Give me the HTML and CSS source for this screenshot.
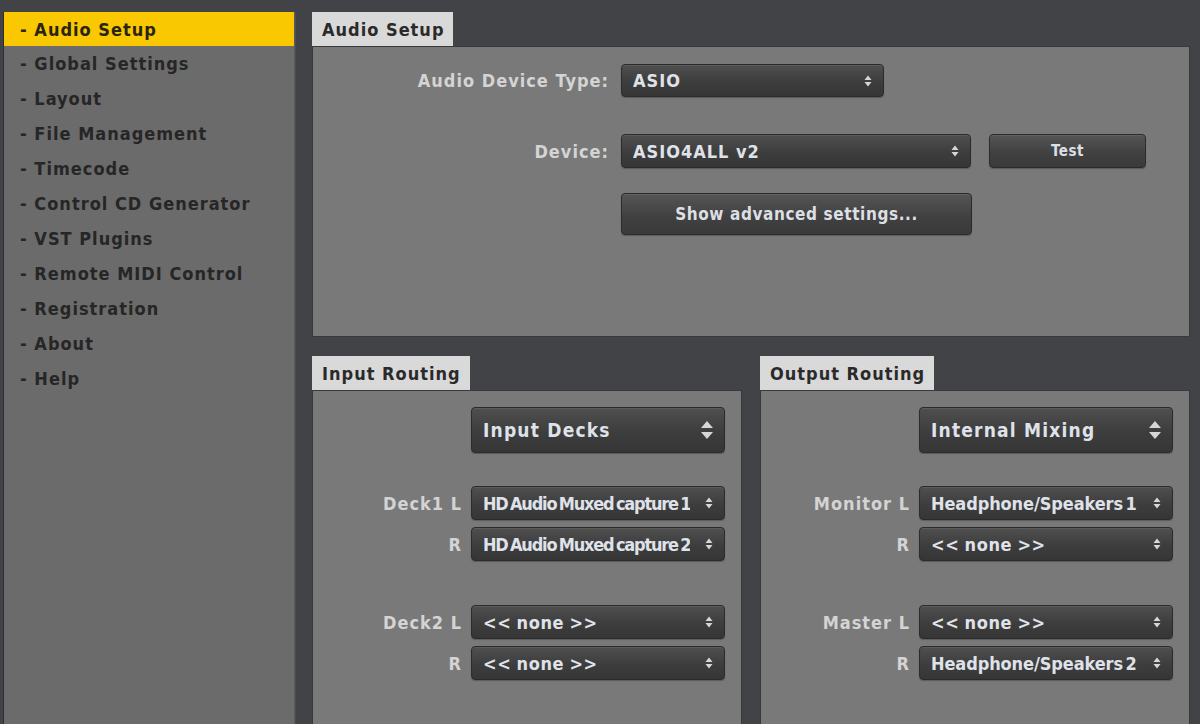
FILE: index.html
```html
<!DOCTYPE html>
<html>
<head>
<meta charset="utf-8">
<title>Audio Setup</title>
<link rel="stylesheet" href="styles.css">
</head>
<body>
<div class="app">
  <nav class="sidebar">
    <div class="nav-item active">- Audio Setup</div>
    <div class="nav-item">- Global Settings</div>
    <div class="nav-item">- Layout</div>
    <div class="nav-item">- File Management</div>
    <div class="nav-item">- Timecode</div>
    <div class="nav-item">- Control CD Generator</div>
    <div class="nav-item">- VST Plugins</div>
    <div class="nav-item">- Remote MIDI Control</div>
    <div class="nav-item">- Registration</div>
    <div class="nav-item">- About</div>
    <div class="nav-item">- Help</div>
  </nav>
  <main class="main">
    <section class="group group-top">
      <div class="tab">Audio Setup</div>
      <div class="panel panel-top">
        <div class="form-row">
          <div class="form-label">Audio Device Type:</div>
          <div class="select sel-type"><span class="sel-text">ASIO</span><svg class="arrows" viewBox="0 0 10 14"><path d="M1.5 6L5 1.5L8.5 6Z M1.5 8L5 12.5L8.5 8Z"/></svg></div>
        </div>
        <div class="form-row row-device">
          <div class="form-label">Device:</div>
          <div class="select sel-device"><span class="sel-text">ASIO4ALL v2</span><svg class="arrows" viewBox="0 0 10 14"><path d="M1.5 6L5 1.5L8.5 6Z M1.5 8L5 12.5L8.5 8Z"/></svg></div>
          <div class="button btn-test">Test</div>
        </div>
        <div class="form-row row-adv">
          <div class="form-label"></div>
          <div class="button btn-adv">Show advanced settings...</div>
        </div>
      </div>
    </section>
    <div class="routing">
      <section class="group">
        <div class="tab">Input Routing</div>
        <div class="panel panel-route">
          <div class="route-row row-mode">
            <div class="select sel-big"><span class="sel-text">Input Decks</span><svg class="arrows arrows-big" viewBox="0 0 16 22"><path d="M2 9L8 2L14 9Z M2 13L8 20L14 13Z"/></svg></div>
          </div>
          <div class="route-row row-first">
            <div class="route-label">Deck1 L</div>
            <div class="select sel-route"><span class="sel-text squeeze">HD Audio Muxed capture 1</span><svg class="arrows" viewBox="0 0 10 14"><path d="M1.5 6L5 1.5L8.5 6Z M1.5 8L5 12.5L8.5 8Z"/></svg></div>
          </div>
          <div class="route-row row-pair">
            <div class="route-label">R</div>
            <div class="select sel-route"><span class="sel-text squeeze">HD Audio Muxed capture 2</span><svg class="arrows" viewBox="0 0 10 14"><path d="M1.5 6L5 1.5L8.5 6Z M1.5 8L5 12.5L8.5 8Z"/></svg></div>
          </div>
          <div class="route-row row-second">
            <div class="route-label">Deck2 L</div>
            <div class="select sel-route"><span class="sel-text none">&lt;&lt; none &gt;&gt;</span><svg class="arrows" viewBox="0 0 10 14"><path d="M1.5 6L5 1.5L8.5 6Z M1.5 8L5 12.5L8.5 8Z"/></svg></div>
          </div>
          <div class="route-row row-pair">
            <div class="route-label">R</div>
            <div class="select sel-route"><span class="sel-text none">&lt;&lt; none &gt;&gt;</span><svg class="arrows" viewBox="0 0 10 14"><path d="M1.5 6L5 1.5L8.5 6Z M1.5 8L5 12.5L8.5 8Z"/></svg></div>
          </div>
        </div>
      </section>
      <section class="group">
        <div class="tab">Output Routing</div>
        <div class="panel panel-route">
          <div class="route-row row-mode">
            <div class="select sel-big"><span class="sel-text">Internal Mixing</span><svg class="arrows arrows-big" viewBox="0 0 16 22"><path d="M2 9L8 2L14 9Z M2 13L8 20L14 13Z"/></svg></div>
          </div>
          <div class="route-row row-first">
            <div class="route-label">Monitor L</div>
            <div class="select sel-route"><span class="sel-text narrow">Headphone/Speakers 1</span><svg class="arrows" viewBox="0 0 10 14"><path d="M1.5 6L5 1.5L8.5 6Z M1.5 8L5 12.5L8.5 8Z"/></svg></div>
          </div>
          <div class="route-row row-pair">
            <div class="route-label">R</div>
            <div class="select sel-route"><span class="sel-text none">&lt;&lt; none &gt;&gt;</span><svg class="arrows" viewBox="0 0 10 14"><path d="M1.5 6L5 1.5L8.5 6Z M1.5 8L5 12.5L8.5 8Z"/></svg></div>
          </div>
          <div class="route-row row-second">
            <div class="route-label">Master L</div>
            <div class="select sel-route"><span class="sel-text none">&lt;&lt; none &gt;&gt;</span><svg class="arrows" viewBox="0 0 10 14"><path d="M1.5 6L5 1.5L8.5 6Z M1.5 8L5 12.5L8.5 8Z"/></svg></div>
          </div>
          <div class="route-row row-pair">
            <div class="route-label">R</div>
            <div class="select sel-route"><span class="sel-text narrow">Headphone/Speakers 2</span><svg class="arrows" viewBox="0 0 10 14"><path d="M1.5 6L5 1.5L8.5 6Z M1.5 8L5 12.5L8.5 8Z"/></svg></div>
          </div>
        </div>
      </section>
    </div>
  </main>
</div>
</body>
</html>
```

FILE: styles.css
```css
html, body {
  margin: 0;
  padding: 0;
}

body {
  background: #414347;
  font-family: "DejaVu Sans Condensed", "DejaVu Sans", sans-serif;
  font-weight: bold;
  font-size: 18px;
  letter-spacing: 1px;
  overflow: hidden;
}

.app {
  display: flex;
  height: 724px;
  box-sizing: border-box;
  padding: 12px 10px 0 3px;
}

/* Sidebar */
.sidebar {
  width: 292px;
  flex-shrink: 0;
  box-sizing: border-box;
  background: #6b6b6b;
  border-left: 1px solid #2e2f32;
  border-right: 1px solid #5a5b5e;
  margin-right: 17px;
  box-shadow: 1px 0 0 #4b4d51;
}

.nav-item {
  height: 35px;
  line-height: 36px;
  padding-left: 16px;
  color: #262626;
  white-space: nowrap;
}

.nav-item.active {
  height: 34px;
  line-height: 35px;
  background: #fac800;
  color: #2a2412;
}

/* Main column */
.main {
  flex: 1;
  display: flex;
  flex-direction: column;
  min-width: 0;
}

.group {
  display: flex;
  flex-direction: column;
  align-items: flex-start;
  min-height: 0;
}

.tab {
  height: 34px;
  line-height: 35px;
  padding: 0 9px 0 10px;
  background: #d9d9d9;
  color: #2a2a2a;
  white-space: nowrap;
}

.panel {
  align-self: stretch;
  box-sizing: border-box;
  background: #797979;
  border: 1px solid #38393c;
}

.panel-top {
  height: 291px;
  padding-top: 17px;
}

/* Form rows in the top panel */
.form-row {
  display: flex;
  align-items: center;
  gap: 12px;
}

.form-label {
  width: 296px;
  flex-shrink: 0;
  text-align: right;
  color: #d4d4d4;
  white-space: nowrap;
}

.row-device {
  margin-top: 37px;
}

.row-device .btn-test {
  margin-left: 6px;
}

.row-adv {
  margin-top: 25px;
}

/* Select boxes */
.select {
  display: flex;
  align-items: center;
  justify-content: space-between;
  box-sizing: border-box;
  border: 1px solid #2a2b2d;
  border-radius: 4px;
  background: linear-gradient(#4f4f50, #3d3d3e 55%, #363637);
  box-shadow: inset 0 1px 0 rgba(255, 255, 255, 0.08), 0 1px 1px rgba(0, 0, 0, 0.25);
  padding: 0 10px 0 11px;
  color: #dfe2e8;
  white-space: nowrap;
}

.sel-text {
  overflow: hidden;
}

.squeeze {
  letter-spacing: -1.2px;
  word-spacing: -2px;
}

.narrow {
  letter-spacing: -0.1px;
  word-spacing: -3px;
}

.none {
  letter-spacing: 0.6px;
  word-spacing: -1px;
}

.arrows {
  width: 10px;
  height: 14px;
  flex-shrink: 0;
  fill: #d6d6d6;
}

.arrows-big {
  width: 16px;
  height: 22px;
}

.sel-type {
  width: 263px;
  height: 33px;
}

.sel-device {
  width: 350px;
  height: 34px;
}

.sel-big {
  width: 254px;
  height: 46px;
  padding-right: 9px;
  font-size: 19px;
  letter-spacing: 1.2px;
}

.sel-route {
  width: 254px;
  height: 34px;
}

/* Buttons */
.button {
  box-sizing: border-box;
  display: flex;
  align-items: center;
  justify-content: center;
  border: 1px solid #2a2b2d;
  border-radius: 4px;
  background: linear-gradient(#555556, #414142 55%, #3a3a3b);
  box-shadow: inset 0 1px 0 rgba(255, 255, 255, 0.08), 0 1px 1px rgba(0, 0, 0, 0.25);
  color: #dcdfe3;
  white-space: nowrap;
}

.btn-test {
  width: 157px;
  height: 34px;
  font-size: 15px;
  letter-spacing: 0.5px;
}

.btn-adv {
  width: 351px;
  height: 42px;
  font-size: 17px;
  letter-spacing: 0.6px;
}

/* Routing area */
.routing {
  flex: 1;
  display: grid;
  grid-template-columns: 1fr 1fr;
  column-gap: 18px;
  margin-top: 19px;
  min-height: 0;
}

.routing .group {
  height: 100%;
}

.panel-route {
  flex: 1;
  padding: 16px 16px 0 0;
  border-bottom: none;
}

.route-row {
  display: flex;
  align-items: center;
  justify-content: flex-end;
  gap: 9px;
}

.route-label {
  color: #d4d4d4;
  white-space: nowrap;
}

.row-first {
  margin-top: 33px;
}

.row-pair {
  margin-top: 7px;
}

.row-second {
  margin-top: 44px;
}
```
